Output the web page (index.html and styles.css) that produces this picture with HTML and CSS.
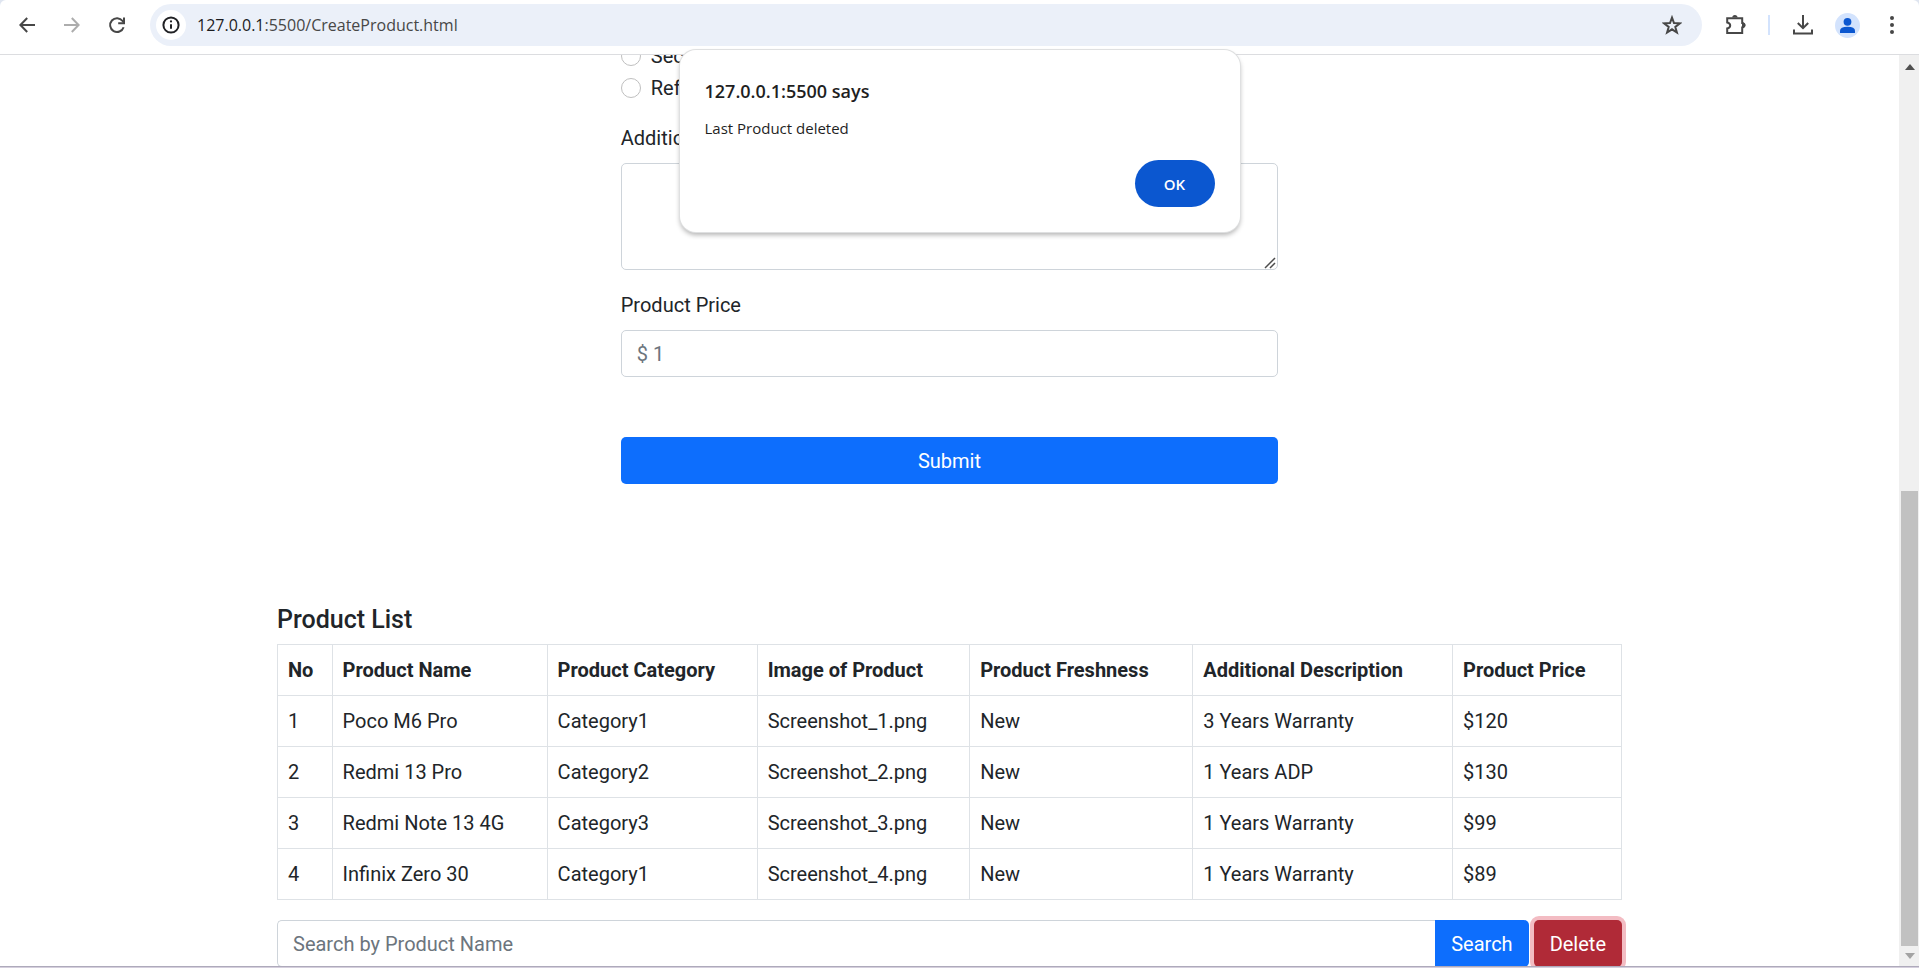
FILE: index.html
```html
<!DOCTYPE html>
<html lang="en">
<head>
<meta charset="utf-8">
<title>Create Product</title>
<link rel="stylesheet" href="styles.css">
</head>
<body>
<header class="toolbar">
  <div class="nav">
    <button class="icon-btn" aria-label="Back"><svg width="20" height="20" viewBox="0 0 20 20"><path d="M10.2 3 3.4 10l6.8 7M3.6 10H18" class="stroke"/></svg></button>
    <button class="icon-btn muted" aria-label="Forward"><svg width="20" height="20" viewBox="0 0 20 20"><path d="M9.8 3 16.6 10l-6.8 7M16.4 10H2" class="stroke"/></svg></button>
    <button class="icon-btn" aria-label="Reload"><svg width="20" height="20" viewBox="0 0 20 20"><path d="M16.6 12.2A6.9 6.9 0 1 1 15.6 6L17 7.6" class="stroke"/><path d="M17 2.4v5.8h-5.8" class="stroke"/></svg></button>
  </div>
  <div class="omnibox">
    <button class="site-info" aria-label="Site information"><svg width="18" height="18" viewBox="0 0 18 18"><circle cx="9" cy="9" r="7.6" class="stroke"/><path d="M9 8.2v4.6" class="stroke"/><circle cx="9" cy="5.4" r="1.1" class="fill"/></svg></button>
    <span class="url"><span class="host">127.0.0.1</span>:5500/CreateProduct.html</span>
    <button class="icon-btn" aria-label="Bookmark"><svg width="20" height="20" viewBox="0 0 20 20"><path d="M10 2.6l2 5.4 5.900.3-4.600 3.600 1.600 5.600L10 14.300l-4.900 3.200 1.600-5.600L2.100 8.300l5.900-.3z" class="stroke"/></svg></button>
  </div>
  <div class="actions">
    <button class="icon-btn" aria-label="Extensions"><svg width="22" height="22" viewBox="0 0 22 22"><path d="M2.200 4.200h15v4.800q2 .2 2 2.200t-2 2.200v5.600h-15v-4.600q3-.6 3-3t-3-3z" class="stroke"/><path d="M7.200 3.600q.2-2.600 2.700-2.600t2.700 2.600zM17 8.600q3.600.2 3.600 2.600T17 13.800z" class="fill"/></svg></button>
    <span class="divider"></span>
    <button class="icon-btn" aria-label="Downloads"><svg width="22" height="22" viewBox="0 0 22 22"><path d="M11 1v13M5.800 9 11 14.200 16.200 9M2 15.400v4.200h18v-4.200" class="stroke"/></svg></button>
    <button class="avatar" aria-label="Profile"><svg width="25" height="25" viewBox="0 0 25 25"><circle cx="12.500" cy="8.800" r="3.900"/><path d="M5 20v-2.200q0-4 7.500-4t7.500 4V20z"/></svg></button>
    <button class="icon-btn" aria-label="Menu"><svg width="20" height="20" viewBox="0 0 20 20"><g class="fill"><circle cx="10" cy="3" r="2"/><circle cx="10" cy="10" r="2"/><circle cx="10" cy="17" r="2"/></g></svg></button>
  </div>
</header>
<div class="window">
  <main class="page">
    <div class="container">
      <form class="product-form">
        <label class="radio"><input type="radio" name="freshness">Second Hand</label>
        <label class="radio"><input type="radio" name="freshness">Refurbished</label>
        <div class="field description">
          <label for="description">Additional Description</label>
          <div class="area">
            <textarea id="description"></textarea>
            <svg class="grip" width="12" height="12" viewBox="0 0 12 12" aria-hidden="true"><path d="M1 11 11 1M6 11l5-5"/></svg>
          </div>
        </div>
        <div class="field">
          <label for="price">Product Price</label>
          <input id="price" class="control" type="text" placeholder="$ 1">
        </div>
        <button type="button" class="btn primary submit">Submit</button>
      </form>
      <h5>Product List</h5>
      <table>
        <thead>
          <tr><th>No</th><th>Product Name</th><th>Product Category</th><th>Image of Product</th><th>Product Freshness</th><th>Additional Description</th><th>Product Price</th></tr>
        </thead>
        <tbody>
          <tr><td>1</td><td>Poco M6 Pro</td><td>Category1</td><td>Screenshot_1.png</td><td>New</td><td>3 Years Warranty</td><td>$120</td></tr>
          <tr><td>2</td><td>Redmi 13 Pro</td><td>Category2</td><td>Screenshot_2.png</td><td>New</td><td>1 Years ADP</td><td>$130</td></tr>
          <tr><td>3</td><td>Redmi Note 13 4G</td><td>Category3</td><td>Screenshot_3.png</td><td>New</td><td>1 Years Warranty</td><td>$99</td></tr>
          <tr><td>4</td><td>Infinix Zero 30</td><td>Category1</td><td>Screenshot_4.png</td><td>New</td><td>1 Years Warranty</td><td>$89</td></tr>
        </tbody>
      </table>
      <div class="search">
        <input class="control" type="text" placeholder="Search by Product Name" aria-label="Search by Product Name">
        <button type="button" class="btn primary find">Search</button>
        <button type="button" class="btn danger">Delete</button>
      </div>
    </div>
  </main>
  <div class="scrollbar" aria-hidden="true">
    <div class="arrow start"><svg width="10" height="6" viewBox="0 0 10 6"><path d="M0 6 5 0l5 6z"/></svg></div>
    <div class="before"></div>
    <div class="thumb"></div>
    <div class="arrow end"><svg width="10" height="6" viewBox="0 0 10 6"><path d="M0 0l5 6 5-6z"/></svg></div>
  </div>
</div>
<div class="edge"></div>
<div class="dialog" role="alertdialog" aria-labelledby="dialog-title" aria-describedby="dialog-text">
  <h2 id="dialog-title">127.0.0.1:5500 says</h2>
  <p id="dialog-text">Last Product deleted</p>
  <button class="ok">OK</button>
</div>
</body>
</html>
```
FILE: styles.css
```css
* { box-sizing: border-box; }

body {
  margin: 0;
  height: 100vh;
  display: flex;
  flex-direction: column;
  overflow: hidden;
  background: #dfe5f0;
  color: #212529;
  font: 400 20px/30px Roboto, "Liberation Sans", sans-serif;
}

button, input, textarea { font: inherit; color: inherit; margin: 0; }
button { border: 0; padding: 0; background: none; }
svg { display: block; }

.stroke { fill: none; stroke: currentColor; stroke-width: 2; }
.fill { fill: currentColor; }

/* Browser toolbar */
.toolbar {
  flex: none;
  display: flex;
  align-items: center;
  height: 55px;
  padding: 0 17px 4px;
  border-bottom: 1px solid #dcdde0;
  border-radius: 6px 6px 0 0;
  background: #fff;
  color: #474747;
}
.nav { display: flex; gap: 25px; margin-right: 23px; }
.icon-btn { display: grid; place-items: center; min-width: 20px; }
.muted { color: #adadad; }
.omnibox {
  flex: 1;
  display: flex;
  align-items: center;
  height: 42px;
  padding: 0 20px 0 6px;
  border-radius: 21px;
  background: #ebf0f9;
}
.site-info {
  display: grid;
  place-items: center;
  width: 30px;
  height: 30px;
  border-radius: 50%;
  background: #fff;
  color: #202124;
}
.url {
  flex: 1;
  padding-left: 11px;
  font: 16px/24px "Open Sans", "Noto Sans", sans-serif;
}
.host { color: #1b1c1f; }
.actions { display: flex; align-items: center; margin-left: 23px; }
.divider { width: 2px; height: 20px; margin: 0 22px 0 21px; background: #d3e3fd; }
.avatar {
  margin: 0 22px 0 21px;
  border-radius: 50%;
  background: #d3e3fd;
  fill: #0b57d0;
}

/* Page area, scrolled to its end */
.window { flex: 1; min-height: 0; display: flex; }
.page {
  flex: 1;
  display: flex;
  flex-direction: column;
  justify-content: flex-end;
  overflow: hidden;
  padding-bottom: 1px;
  background: #fff;
}
.container { width: 100%; max-width: 1375px; margin: 0 auto; padding: 0 15px; }

.product-form { width: calc(50% - 15px); margin: 0 auto 120px; }
.radio { display: flex; align-items: center; gap: 10px; margin-bottom: 2px; }
.radio input {
  appearance: none;
  width: 20px;
  height: 20px;
  border: 1px solid #bfbfbf;
  border-radius: 50%;
  background: #fff;
}
.field { display: flex; flex-direction: column; gap: 10px; margin-bottom: 20px; }
.description { padding-top: 18px; }
textarea, .control {
  width: 100%;
  padding: 8px 15px;
  border: 1px solid #ced4da;
  border-radius: 5px;
  background: #fff;
}
.area { position: relative; }
textarea { display: block; height: 107px; resize: vertical; }
textarea::-webkit-resizer { background: transparent; }
.grip {
  position: absolute;
  right: 2px;
  bottom: 1px;
  fill: none;
  stroke: #4d4d4d;
  stroke-width: 1.5;
  pointer-events: none;
}
.control { height: 47px; }
.control::placeholder { color: #6c757d; opacity: 1; }
.btn {
  height: 47px;
  padding: 0 16px;
  border-radius: 5px;
  color: #fff;
}
.primary { background: #0d6efd; }
.submit { display: block; width: 100%; margin-top: 60px; }

h5 { margin: 0 0 8px; font-size: 25px; line-height: 32px; font-weight: 500; }
table { width: 100%; border-collapse: collapse; margin-bottom: 20px; }
th, td { padding: 10px; border: 1px solid #dee2e6; text-align: left; }
th { font-weight: 700; }

.search { display: flex; }
.search .control { flex: 1; border-radius: 5px 0 0 5px; border-right: 0; }
.find { border-radius: 0 5px 5px 0; margin-right: 5px; }
.danger { background: #b02a37; box-shadow: 0 0 0 4px #f3bcc3; }

/* Scrollbar */
.scrollbar {
  flex: none;
  display: flex;
  flex-direction: column;
  width: 20px;
  padding-bottom: 2px;
  background: #f0f0f0;
}
.arrow { flex: none; display: grid; place-items: center; height: 20px; padding-left: 1px; fill: #505050; }
.start { padding-top: 3px; }
.end { fill: #a3a3a3; }
.before { flex: 416; }
.thumb { flex: 455; margin: 0 1px 0 2px; background: #c1c1c1; }

.edge { position: absolute; left: 0; right: 0; bottom: 0; height: 2px; background: #d5cfdd; border-top: 1px solid #aeaabb; }

/* Alert */
.dialog {
  position: absolute;
  top: 50px;
  left: 50%;
  width: 560px;
  margin-left: -280px;
  padding: 25px;
  display: flex;
  flex-direction: column;
  border-radius: 16px;
  background: #fff;
  box-shadow: 0 0 0 1px #dfe0e1, 0 3px 5px rgba(0, 0, 0, .3);
  color: #1f1f1f;
  font-family: "Open Sans", "Noto Sans", sans-serif;
}
.dialog h2 { margin: 0 0 11px; font-size: 18px; line-height: 32px; font-weight: 600; }
.dialog p { margin: 0 0 22px; font-size: 15px; line-height: 20px; }
.ok {
  align-self: flex-end;
  width: 80px;
  height: 47px;
  border-radius: 24px;
  background: #0b57d0;
  color: #fff;
  font-size: 15px;
  font-weight: 600;
}
```
